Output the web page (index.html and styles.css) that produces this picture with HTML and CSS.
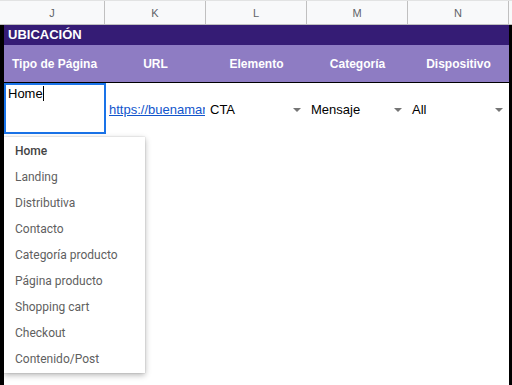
FILE: index.html
```html
<!DOCTYPE html>
<html lang="es">
<head>
  <meta charset="UTF-8">
  <title>Ubicación</title>
  <link rel="stylesheet" href="styles.css">
</head>
<body>
  <div class="sheet">
    <div class="colheads">
      <div class="colhead first">J</div>
      <div class="colhead">K</div>
      <div class="colhead">L</div>
      <div class="colhead">M</div>
      <div class="colhead">N</div>
      <div class="colhead rest"></div>
    </div>

    <div class="grid">
      <div class="row title">UBICACIÓN</div>
      <div class="row heads">
        <div class="cell">Tipo de Página</div>
        <div class="cell">URL</div>
        <div class="cell">Elemento</div>
        <div class="cell">Categoría</div>
        <div class="cell">Dispositivo</div>
      </div>
      <div class="row data">
        <div class="cell"></div>
        <div class="cell"><a class="link" href="#">https://buenamarca.com</a></div>
        <div class="cell select">CTA <span class="arrow"></span></div>
        <div class="cell select">Mensaje <span class="arrow"></span></div>
        <div class="cell select">All <span class="arrow"></span></div>
      </div>

      <!-- celda en edición -->
      <div class="editor"><span class="caret">Home</span></div>

      <!-- lista de validación -->
      <ul class="menu">
        <li class="active">Home</li>
        <li>Landing</li>
        <li>Distributiva</li>
        <li>Contacto</li>
        <li>Categoría producto</li>
        <li>Página producto</li>
        <li>Shopping cart</li>
        <li>Checkout</li>
        <li>Contenido/Post</li>
      </ul>
    </div>
  </div>
</body>
</html>
```

FILE: styles.css
```css
* { box-sizing: border-box; }
body {
  margin: 0;
  width: 512px;
  height: 385px;
  overflow: hidden;
  background: #fff;
  font-family: Arial, "Liberation Sans", sans-serif;
}
.sheet { height: 385px; }

.colheads {
  display: grid;
  grid-template-columns: 105px 101px 101px 101px 101px 1fr;
  height: 25px;
  background: #f8f9fa;
  border-top: 1px solid #e2e3e3;
  border-bottom: 1px solid #c0c0c0;
}
.colhead {
  display: flex; align-items: center; justify-content: center;
  border-right: 1px solid #c0c0c0;
  font-size: 11px;
  color: #5f6368;
}
.colhead.rest { border-right: none; }

.grid {
  position: relative;
  height: 360px;
  border-left: 4px solid #000;
  border-right: 3px solid #000;
}
.row { display: grid; grid-template-columns: 101px 101px 101px 101px 101px; }
.title {
  display: block;
  height: 20px;
  line-height: 20px;
  padding-left: 4px;
  background: #351c75;
  color: #fff;
  font-weight: bold;
  font-size: 13px;
}
.heads {
  height: 38px;
  background: #8e7cc3;
  border-bottom: 1px solid #000;
  color: #fff;
  font-weight: bold;
  font-size: 12px;
}
.heads .cell {
  display: flex; align-items: center; justify-content: center;
  padding-top: 1px;
}
.data { height: 52px; font-size: 13px; color: #000; }
.data .cell {
  padding: 18px 3px 0 4px;
  line-height: 17px;
  white-space: nowrap;
  overflow: hidden;
}
.link {
  display: inline-block;
  max-width: 96px;
  overflow: hidden;
  vertical-align: top;
  color: #1155cc;
  text-decoration: underline;
}
.select { position: relative; }
.arrow {
  position: absolute;
  right: 6px; top: 25px;
  border-left: 4px solid transparent;
  border-right: 4px solid transparent;
  border-top: 4px solid #757575;
}

.editor {
  position: absolute;
  left: 0; top: 58px;
  width: 102px; height: 51px;
  border: 2px solid #1a73e8;
  background: #fff;
  padding: 1px 0 0 2px;
  font-size: 13px;
  line-height: 16px;
  color: #000;
}
.caret { border-right: 1px solid #000; }

.menu {
  position: absolute;
  left: 0; top: 112px;
  width: 141px; height: 236px;
  margin: 0;
  padding: 1px 0 0;
  list-style: none;
  background: #fff;
  box-shadow: 0 2px 6px rgba(0,0,0,0.3), 0 0 1px rgba(0,0,0,0.25);
  font-family: Roboto, "Noto Sans", sans-serif;
  font-size: 12px;
  color: #5f5f5f;
}
.menu li {
  height: 26px;
  line-height: 26px;
  padding-left: 11px;
  white-space: nowrap;
}
.menu li.active { color: #444; font-weight: 500; }
```
